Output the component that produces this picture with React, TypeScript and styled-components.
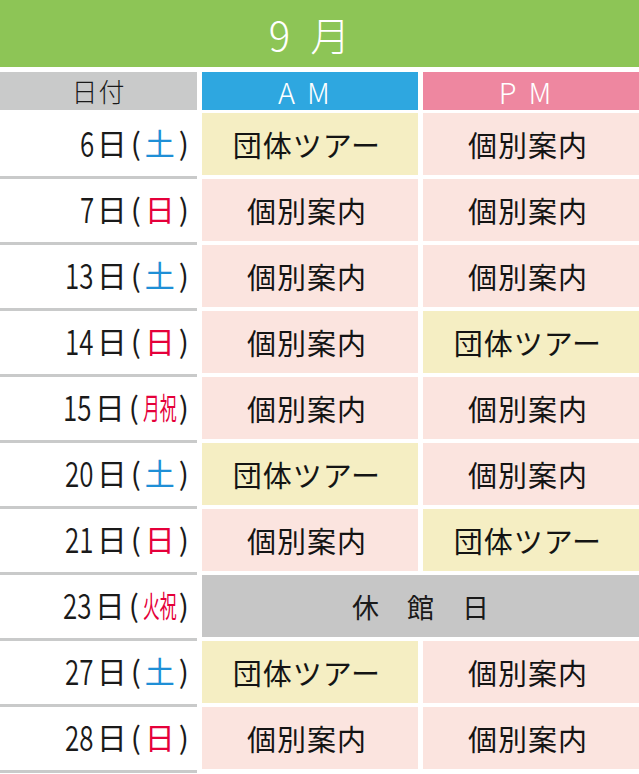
import React from "react";
import styled, { createGlobalStyle } from "styled-components";

const GlobalStyle = createGlobalStyle`
  html, body {
    margin: 0;
    padding: 0;
    background: #ffffff;
  }
  body {
    font-family: "Noto Sans CJK JP", "Noto Sans", sans-serif;
    color: #1a1a1a;
  }
`;

const COLS = "197px 216px 216px";

const Page = styled.div`
  width: 639px;
  display: flex;
  flex-direction: column;
`;

const MonthBar = styled.header`
  height: 67px;
  background: #8dc556;
  display: flex;
  align-items: center;
  justify-content: center;
  margin-bottom: 5px;
`;

const MonthTitle = styled.h1`
  margin: 0;
  font-family: "Noto Sans CJK JP", sans-serif;
  font-weight: 300;
  font-size: 40px;
  line-height: 1;
  letter-spacing: 20px;
  color: #ffffff;
`;

const HeaderRow = styled.div`
  display: grid;
  grid-template-columns: ${COLS};
  column-gap: 5px;
  height: 38px;
  margin-bottom: 3px;
`;

const HeadCell = styled.div<{ $bg: string; $fg: string; $spacing: number; $size: number }>`
  background: ${(p) => p.$bg};
  color: ${(p) => p.$fg};
  display: flex;
  align-items: center;
  justify-content: center;
  font-size: ${(p) => p.$size}px;
  font-weight: 300;
  letter-spacing: ${(p) => p.$spacing}px;
  line-height: 1;
`;

const Row = styled.div`
  display: grid;
  grid-template-columns: ${COLS};
  column-gap: 5px;
  height: 66px;
`;

const DateCell = styled.div`
  box-sizing: border-box;
  height: 66px;
  border-bottom: 3px solid #c9caca;
  display: flex;
  align-items: center;
  justify-content: flex-end;
  padding: 0 4px 6px 0;
  font-size: 30px;
  line-height: 1;
  letter-spacing: 2px;
  white-space: nowrap;
`;

const DayNum = styled.span<{ $digits: number }>`
  display: inline-flex;
  justify-content: flex-end;
  width: ${(p) => p.$digits * 14.5}px;
  margin-right: 3px;
  letter-spacing: 0;
`;

const DayNumInner = styled.span`
  display: inline-block;
  flex: none;
  font-size: 35px;
  font-weight: 350;
  transform: scaleX(0.74);
  transform-origin: right bottom;
`;

const Paren = styled.span`
  margin: 0 2px;
`;

const Weekday = styled.span<{ $color: string }>`
  color: ${(p) => p.$color};
`;

const HolidayMark = styled.span<{ $color: string }>`
  display: inline-block;
  width: 34px;
  overflow: visible;
  white-space: nowrap;
  color: ${(p) => p.$color};
  letter-spacing: 0;
  transform: scaleX(0.56);
  transform-origin: left center;
`;

const SlotCell = styled.div<{ $kind: "tour" | "guide" }>`
  height: 62px;
  background: ${(p) => (p.$kind === "tour" ? "#f5eec3" : "#fbe4df")};
  display: flex;
  align-items: center;
  justify-content: center;
  padding-right: 6px;
  box-sizing: border-box;
  font-size: 29px;
  letter-spacing: 1px;
  line-height: 1;
  color: #141414;
`;

const ClosedCell = styled.div`
  grid-column: span 2;
  height: 62px;
  background: #c6c6c6;
  display: flex;
  align-items: center;
  justify-content: center;
  font-size: 27px;
  letter-spacing: 28px;
  padding-left: 28px;
  box-sizing: border-box;
  line-height: 1;
  color: #1a1a1a;
`;

type Kind = "tour" | "guide";
type Day = {
  day: number;
  wd: string;
  holiday?: boolean;
  am?: Kind;
  pm?: Kind;
  closed?: boolean;
};

const BLUE = "#1f8fd6";
const RED = "#e5003a";

const days: Day[] = [
  { day: 6, wd: "土", am: "tour", pm: "guide" },
  { day: 7, wd: "日", am: "guide", pm: "guide" },
  { day: 13, wd: "土", am: "guide", pm: "guide" },
  { day: 14, wd: "日", am: "guide", pm: "tour" },
  { day: 15, wd: "月祝", holiday: true, am: "guide", pm: "guide" },
  { day: 20, wd: "土", am: "tour", pm: "guide" },
  { day: 21, wd: "日", am: "guide", pm: "tour" },
  { day: 23, wd: "火祝", holiday: true, closed: true },
  { day: 27, wd: "土", am: "tour", pm: "guide" },
  { day: 28, wd: "日", am: "guide", pm: "guide" },
];

const label = (k: Kind) => (k === "tour" ? "団体ツアー" : "個別案内");

export default function App() {
  return (
    <>
      <GlobalStyle />
      <Page>
        <MonthBar>
          <MonthTitle>9月</MonthTitle>
        </MonthBar>
        <HeaderRow>
          <HeadCell $bg="#c9caca" $fg="#1a1a1a" $spacing={1} $size={26}>
            日付
          </HeadCell>
          <HeadCell $bg="#2ea7e0" $fg="#ffffff" $spacing={12} $size={29}>
            AM
          </HeadCell>
          <HeadCell $bg="#ee87a0" $fg="#ffffff" $spacing={12} $size={29}>
            PM
          </HeadCell>
        </HeaderRow>
        {days.map((d) => {
          const color = d.wd === "土" ? BLUE : RED;
          return (
            <Row key={d.day}>
              <DateCell>
                <DayNum $digits={String(d.day).length}>
                  <DayNumInner>{d.day}</DayNumInner>
                </DayNum>
                日<Paren>(</Paren>
                {d.holiday ? (
                  <HolidayMark $color={color}>{d.wd}</HolidayMark>
                ) : (
                  <Weekday $color={color}>{d.wd}</Weekday>
                )}
                <Paren>)</Paren>
              </DateCell>
              {d.closed ? (
                <ClosedCell>休館日</ClosedCell>
              ) : (
                <>
                  <SlotCell $kind={d.am!}>{label(d.am!)}</SlotCell>
                  <SlotCell $kind={d.pm!}>{label(d.pm!)}</SlotCell>
                </>
              )}
            </Row>
          );
        })}
      </Page>
    </>
  );
}
